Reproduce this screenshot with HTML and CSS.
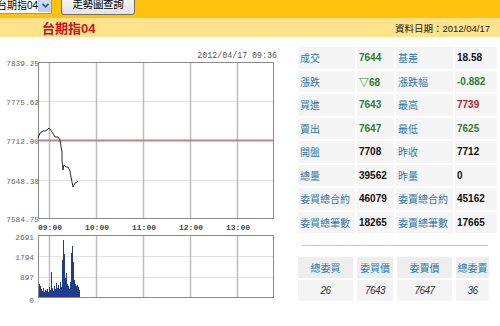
FILE: index.html
```html
<!DOCTYPE html>
<html lang="zh-Hant">
<head>
    <meta charset="UTF-8">
    <title>台期指04</title>
    <link rel="stylesheet" href="styles.css">
</head>
<body>

    <!-- Barra superior -->
    <div class="topbar">
        <div class="select-box">
            <span class="select-text">台期指04</span>
            <span class="select-arrow">
                <svg width="7" height="5" viewBox="0 0 7 5"><path d="M0.5 0.8 L3.5 3.8 L6.5 0.8" fill="none" stroke="#2b4f8f" stroke-width="1.6"/></svg>
            </span>
        </div>
        <div class="btn-query">走勢圖查詢</div>
    </div>

    <div class="titlebar">
        <span class="title">台期指04</span>
        <span class="data-date">資料日期：2012/04/17</span>
    </div>

    <div class="main">
        <!-- Gráfico -->
        <div class="chart">
            <svg width="290" height="280" viewBox="0 37 290 280">
                <text class="stamp" x="277" y="58" text-anchor="end">2012/04/17 09:36</text>

                <!-- precio -->
                <g class="grid-h">
                    <line x1="39" y1="101.5" x2="273" y2="101.5"/>
                    <line x1="39" y1="180.5" x2="273" y2="180.5"/>
                </g>
                <g class="grid-v">
                    <line x1="49.5" y1="63" x2="49.5" y2="218"/>
                    <line x1="96.5" y1="63" x2="96.5" y2="218"/>
                    <line x1="143.5" y1="63" x2="143.5" y2="218"/>
                    <line x1="190.5" y1="63" x2="190.5" y2="218"/>
                    <line x1="237.5" y1="63" x2="237.5" y2="218"/>
                </g>
                <line class="ref-line" x1="39" y1="140.5" x2="273" y2="140.5"/>
                <rect class="frame" x="38.5" y="62.5" width="235" height="156"/>
                <polyline class="price" points="38,138 40,133 43,131 45,131 47,130 49,128 50,129 52,132 54,135 55,137 58,137 60,140 61,146 62,152 62,160 63,170 64,165 66,167 68,167 70,171 71,177 72,182 73,187 74,185 75,183 77,182 78,181"/>

                <g class="axis-label">
                    <text x="39" y="66" text-anchor="end">7839.25</text>
                    <text x="39" y="105" text-anchor="end">7775.62</text>
                    <text x="39" y="144" text-anchor="end">7712.00</text>
                    <text x="39" y="184" text-anchor="end">7648.38</text>
                    <text x="39" y="222" text-anchor="end">7584.75</text>
                </g>

                <g class="time-label">
                    <text x="50" y="230" text-anchor="middle">09:00</text>
                    <text x="97" y="230" text-anchor="middle">10:00</text>
                    <text x="144" y="230" text-anchor="middle">11:00</text>
                    <text x="191" y="230" text-anchor="middle">12:00</text>
                    <text x="238" y="230" text-anchor="middle">13:00</text>
                </g>

                <!-- volumen -->
                <g class="grid-h">
                    <line x1="39" y1="256.5" x2="273" y2="256.5"/>
                    <line x1="39" y1="277.5" x2="273" y2="277.5"/>
                </g>
                <g class="grid-v">
                    <line x1="49.5" y1="236" x2="49.5" y2="297"/>
                    <line x1="96.5" y1="236" x2="96.5" y2="297"/>
                    <line x1="143.5" y1="236" x2="143.5" y2="297"/>
                    <line x1="190.5" y1="236" x2="190.5" y2="297"/>
                    <line x1="237.5" y1="236" x2="237.5" y2="297"/>
                </g>
                <g id="vol" class="vol"></g>
                <rect class="frame" x="38.5" y="235.5" width="235" height="62"/>

                <g class="axis-label">
                    <text x="34" y="240" text-anchor="end">2691</text>
                    <text x="34" y="260" text-anchor="end">1794</text>
                    <text x="34" y="280" text-anchor="end">897</text>
                    <text x="34" y="303" text-anchor="end">0</text>
                </g>
            </svg>
        </div>

        <!-- Cotización -->
        <div class="quote">
            <div class="quote-grid">
                <div class="lbl">成交</div><div class="val green">7644</div>
                <div class="lbl">基差</div><div class="val">18.58</div>

                <div class="lbl">漲跌</div><div class="val green">▽68</div>
                <div class="lbl">漲跌幅</div><div class="val green">-0.882</div>

                <div class="lbl">買進</div><div class="val green">7643</div>
                <div class="lbl">最高</div><div class="val red">7739</div>

                <div class="lbl">賣出</div><div class="val green">7647</div>
                <div class="lbl">最低</div><div class="val green">7625</div>

                <div class="lbl">開盤</div><div class="val">7708</div>
                <div class="lbl">昨收</div><div class="val">7712</div>

                <div class="lbl">總量</div><div class="val">39562</div>
                <div class="lbl">昨量</div><div class="val">0</div>

                <div class="lbl">委買總合約</div><div class="val">46079</div>
                <div class="lbl">委賣總合約</div><div class="val">45162</div>

                <div class="lbl">委買總筆數</div><div class="val">18265</div>
                <div class="lbl">委賣總筆數</div><div class="val">17665</div>
            </div>

            <div class="sep"></div>

            <div class="order-grid">
                <div class="head">總委買</div>
                <div class="head">委買價</div>
                <div class="head">委賣價</div>
                <div class="head">總委賣</div>
                <div class="cell">26</div>
                <div class="cell">7643</div>
                <div class="cell">7647</div>
                <div class="cell">36</div>
            </div>
        </div>
    </div>

    <script>
        // alturas de las barras de volumen (px), desde las 08:45
        const volumen = [14, 12, 9, 7, 10, 6, 8, 7, 9, 6, 11, 8, 26, 10, 7, 12, 9, 15, 10, 13,
                         9, 16, 11, 38, 58, 44, 20, 25, 14, 12, 9, 16, 45, 52, 36, 18, 14, 12, 13, 11, 8];

        const g = document.getElementById("vol");
        volumen.forEach(function(h, i) {
            const r = document.createElementNS("http://www.w3.org/2000/svg", "rect");
            r.setAttribute("x", 39 + i);
            r.setAttribute("y", 298 - h);
            r.setAttribute("width", 1);
            r.setAttribute("height", h);
            g.appendChild(r);
        });
    </script>
</body>
</html>
```

FILE: styles.css
```css
body {
    margin: 0;
    padding: 0;
    background-color: #fff;
    font-family: 'Liberation Sans', 'Noto Sans CJK TC', sans-serif;
    overflow: hidden;
}

/* barra superior */
.topbar {
    height: 24px;
    margin-top: -6px;
    background-color: #ffc20e;
    display: flex;
    align-items: flex-start;
    gap: 9px;
}

.select-box {
    margin-left: -1px;
    width: 53px;
    height: 20px;
    box-sizing: border-box;
    border: 1px solid #7f9db9;
    background-color: #fff;
    display: flex;
    align-items: flex-end;
    overflow: hidden;
}

.select-text {
    flex: 1;
    margin-left: -3px;
    font-size: 10px;
    line-height: 14px;
    color: #000;
    white-space: nowrap;
}

.select-arrow {
    width: 13px;
    height: 17px;
    margin: 0 0 1px 0;
    background: linear-gradient(#dbe6f7, #b9cdec);
    border-left: 1px solid #a9bfe0;
    display: flex;
    align-items: flex-end;
    justify-content: center;
    padding-bottom: 4px;
    box-sizing: border-box;
}

.btn-query {
    width: 74px;
    height: 21px;
    box-sizing: border-box;
    border: 1px solid #6e6e6e;
    border-radius: 3px;
    background: linear-gradient(#fbfbfb, #e3e3e3);
    font-size: 10.5px;
    line-height: 19px;
    text-align: center;
    color: #000;
    letter-spacing: -0.3px;
}

.titlebar {
    height: 19px;
    background-color: #ffe38c;
    display: flex;
    align-items: center;
    justify-content: space-between;
    padding: 0 10px 0 42px;
}

.title {
    font-size: 13px;
    font-weight: bold;
    color: #d0101a;
}

.data-date {
    font-size: 9.5px;
    color: #222;
}

/* zona principal */
.main {
    display: flex;
}

.chart {
    width: 290px;
}

.chart svg {
    display: block;
}

.stamp {
    font-family: 'Liberation Mono', monospace;
    font-size: 8.3px;
    fill: #555;
}

.frame {
    fill: none;
    stroke: #8a8a8a;
    stroke-width: 1;
}

.grid-v line {
    stroke: #bdbdbd;
    stroke-width: 1.5;
}

.grid-h line {
    stroke: #e2e2e2;
    stroke-width: 1;
}

.ref-line {
    stroke: #b98585;
    stroke-width: 2;
}

.price {
    fill: none;
    stroke: #2a2a2a;
    stroke-width: 1;
}

.vol rect {
    fill: #1f3d8c;
}

.axis-label text {
    font-family: 'Liberation Mono', monospace;
    font-size: 7.8px;
    fill: #666;
}

.time-label text {
    font-family: 'Liberation Mono', monospace;
    font-size: 8px;
    font-weight: bold;
    fill: #444;
}

/* cotización */
.quote {
    margin-left: 8px;
    padding-top: 10px;
}

.quote-grid {
    display: grid;
    grid-template-columns: 57px 37px 57px 42px;
    grid-auto-rows: 21.5px;
    gap: 2px;
}

.quote-grid div {
    background-color: #f5f5f5;
    display: flex;
    align-items: center;
    padding-left: 2px;
    white-space: nowrap;
}

.lbl {
    font-size: 10px;
    color: #2f78ad;
}

.val {
    font-size: 10px;
    font-weight: bold;
    color: #111;
}

.val.green {
    color: #2e7d2e;
}

.val.red {
    color: #c0202a;
}

.sep {
    margin: 12px 0 0 4px;
    width: 186px;
    height: 1px;
    background-color: #c8c8c8;
}

.order-grid {
    margin-top: 11px;
    display: grid;
    grid-template-columns: 55px 36px 55px 33px;
    grid-auto-rows: 21px;
    gap: 2px 4px;
}

.order-grid div {
    display: flex;
    align-items: center;
    justify-content: center;
    white-space: nowrap;
}

.head {
    background-color: #eeeeee;
    font-size: 10px;
    color: #2a7ca6;
}

.cell {
    background-color: #f4f4f4;
    font-size: 10px;
    font-style: italic;
    color: #333;
    letter-spacing: -0.5px;
}
```
